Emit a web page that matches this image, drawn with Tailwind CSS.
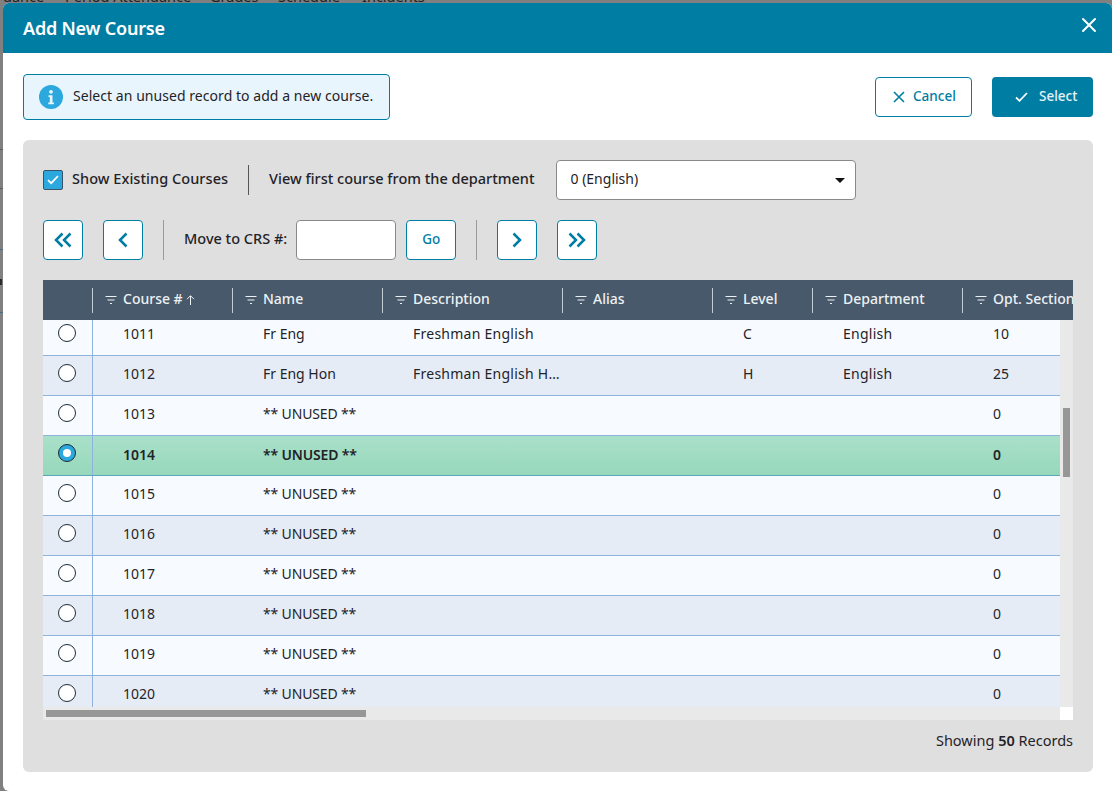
<!DOCTYPE html>
<html lang="en">
<head>
  <meta charset="UTF-8" />
  <title>Add New Course</title>
  <script src="https://cdn.jsdelivr.net/npm/@tailwindcss/browser@4"></script>
</head>
<body class="h-[791px] w-[1112px] overflow-hidden bg-[#808080] font-['Noto_Sans',sans-serif] text-[14px] text-[#1f2328]">

  <!-- Page behind the dialog -->
  <div class="absolute left-0 top-0 h-[3px] w-full overflow-hidden">
    <div class="-mt-[12px] flex h-4 items-center text-[14.5px] leading-4 text-[#222]">
      <span class="ml-[3px] w-[62px]">dance</span><span class="w-[145px]">Period Attendance</span><span class="w-[68px]">Grades</span><span class="w-[84px]">Schedule</span><span>Incidents</span>
    </div>
  </div>
  <div class="absolute left-0 top-[149px] h-px w-[3px] bg-[#5c5c5c]"></div>
  <div class="absolute left-0 top-[188px] h-px w-[3px] bg-[#5c5c5c]"></div>
  <div class="absolute left-0 top-[249px] h-px w-[3px] bg-[#3f6f80]"></div>
  <div class="absolute left-0 top-[279px] h-[6px] w-[2px] bg-[#2a2a2a]"></div>
  <div class="absolute left-0 top-[312px] h-px w-[3px] bg-[#3f6f80]"></div>

  <!-- Dialog -->
  <div class="ml-[3px] mt-[3px] flex h-[788px] w-[1109px] flex-col overflow-hidden rounded-l-[6px] rounded-tr-[6px] bg-white">
    <div class="flex h-[50px] shrink-0 items-center justify-between bg-[#007da3] pl-[20px] pr-[15px]">
      <h1 class="text-[18px] font-semibold tracking-[-0.2px] text-white">Add New Course</h1>
      <svg class="mb-[6px] h-[16px] w-[16px]" viewBox="0 0 16 16" fill="none" stroke="white" stroke-width="2" stroke-linecap="round"><path d="M2 2l12 12M14 2L2 14"/></svg>
    </div>

    <div class="flex h-[87px] shrink-0 items-center justify-between pl-[20px] pr-[19px]">
      <div class="flex h-[46px] w-[367px] items-center gap-[10px] rounded-[4px] border border-[#007da3] bg-[#e9f5fc] pl-[15px]">
        <svg class="h-[24px] w-[24px]" viewBox="0 0 24 24"><circle cx="12" cy="12" r="12" fill="#2ba8de"/><circle cx="12" cy="6.8" r="1.9" fill="#e9f5fc"/><path d="M9.5 10.2h4v7.2h1.4v1.8H9.3v-1.8h1.5v-5.4H9.5z" fill="#e9f5fc"/></svg>
        <span class="pb-[2px] text-[14px] tracking-[0.05px]">Select an unused record to add a new course.</span>
      </div>
      <div class="flex gap-[20px]">
        <button class="flex h-[40px] w-[97px] items-center gap-[8px] rounded-[4px] border border-[#007da3] bg-white pl-[17px] text-[13.5px] font-medium text-[#007da3]">
          <svg class="h-[12px] w-[12px]" viewBox="0 0 12 12" fill="none" stroke="#007da3" stroke-width="1.6"><path d="M1 1l10 10M11 1L1 11"/></svg>
          <span class="pb-[1px]">Cancel</span>
        </button>
        <button class="flex h-[40px] w-[101px] items-center gap-[11px] rounded-[4px] bg-[#007da3] pl-[23px] text-[13.5px] font-medium text-white/90">
          <svg class="h-[10px] w-[13px]" viewBox="0 0 13 10" fill="none" stroke="white" stroke-width="1.8"><path d="M1 5.5l3.5 3.3L12 1"/></svg>
          <span class="pb-[1px]">Select</span>
        </button>
      </div>
    </div>

    <div class="ml-[20px] flex h-[632px] w-[1070px] shrink-0 flex-col rounded-[6px] bg-[#dfdfdf] px-[20px] pt-[20px]">
      <div class="flex h-[40px] items-center">
        <span class="flex h-[20px] w-[20px] items-center justify-center rounded-[2px] border border-[#3b5368] bg-[#2ba8de]">
          <svg class="h-[10px] w-[12px]" viewBox="0 0 12 10" fill="none" stroke="white" stroke-width="1.8"><path d="M1 5.2l3.2 3L11 1"/></svg>
        </span>
        <span class="ml-[9px] pb-[3px] text-[14.5px] font-medium tracking-[0.05px]">Show Existing Courses</span>
        <span class="ml-[20px] h-[30px] w-px bg-[#555]"></span>
        <span class="ml-[20px] pb-[3px] text-[14.5px] font-medium">View first course from the department</span>
        <div class="ml-[22px] flex h-[40px] w-[300px] items-center justify-between rounded-[4px] border border-[#8a8a8a] bg-white pl-[13px] pr-[10px]">
          <span class="pb-[3px]">0 (English)</span>
          <span class="h-0 w-0 border-x-[5px] border-t-[5px] border-x-transparent border-t-[#111]"></span>
        </div>
      </div>

      <div class="mt-[20px] flex h-[40px] items-center">
        <button class="flex h-[40px] w-[40px] items-center justify-center rounded-[4px] border border-[#007da3] bg-white">
          <svg class="h-[16px] w-[18px]" viewBox="0 0 18 16" fill="none" stroke="#007da3" stroke-width="2.5"><path d="M8.5 1.5L2 8l6.5 6.5M16.5 1.5L10 8l6.5 6.5"/></svg>
        </button>
        <button class="ml-[20px] flex h-[40px] w-[40px] items-center justify-center rounded-[4px] border border-[#007da3] bg-white">
          <svg class="h-[16px] w-[10px]" viewBox="0 0 10 16" fill="none" stroke="#007da3" stroke-width="2.5"><path d="M8.5 1.5L2 8l6.5 6.5"/></svg>
        </button>
        <span class="ml-[20px] h-[40px] w-px bg-[#9a9a9a]"></span>
        <span class="ml-[20px] pb-[3px] text-[14.5px] font-medium">Move to CRS #:</span>
        <input class="ml-[9px] h-[40px] w-[100px] rounded-[4px] border border-[#8a8a8a] bg-white" />
        <button class="ml-[10px] flex h-[40px] w-[50px] items-center justify-center rounded-[4px] border border-[#007da3] bg-white pb-[1px] text-[13.5px] font-medium text-[#007da3]">Go</button>
        <span class="ml-[20px] h-[40px] w-px bg-[#9a9a9a]"></span>
        <button class="ml-[20px] flex h-[40px] w-[40px] items-center justify-center rounded-[4px] border border-[#007da3] bg-white">
          <svg class="h-[16px] w-[10px]" viewBox="0 0 10 16" fill="none" stroke="#007da3" stroke-width="2.5"><path d="M1.5 1.5L8 8l-6.5 6.5"/></svg>
        </button>
        <button class="ml-[20px] flex h-[40px] w-[40px] items-center justify-center rounded-[4px] border border-[#007da3] bg-white">
          <svg class="h-[16px] w-[18px]" viewBox="0 0 18 16" fill="none" stroke="#007da3" stroke-width="2.5"><path d="M1.5 1.5L8 8l-6.5 6.5M9.5 1.5L16 8l-6.5 6.5"/></svg>
        </button>
      </div>

      <!-- Grid -->
      <div class="relative mt-[20px] h-[440px] w-[1030px] shrink-0 overflow-hidden bg-[#e9e9e9]">
        <div id="head" class="grid h-[40px] w-[1030px] grid-cols-[50px_140px_150px_180px_150px_100px_150px_150px] overflow-hidden bg-[#47596b] text-[14px] font-medium text-[#eef1f4]"></div>
        <div class="h-[387px] w-[1017px] overflow-hidden">
          <div id="rows" class="-mt-[4px]"></div>
        </div>
        <!-- scrollbars -->
        <div class="absolute right-0 top-[40px] h-[387px] w-[13px] bg-[#e9e9e9]">
          <div class="ml-[3px] mt-[88px] h-[69px] w-[7px] bg-[#979797]"></div>
        </div>
        <div class="absolute bottom-0 left-0 h-[13px] w-[1017px] bg-[#e9e9e9]">
          <div class="ml-[3px] mt-[3px] h-[7px] w-[320px] bg-[#979797]"></div>
        </div>
        <div class="absolute bottom-0 right-0 h-[13px] w-[13px] bg-white"></div>
      </div>

      <div class="mt-[10px] text-right text-[14.5px]">Showing <b class="font-semibold">50</b> Records</div>
    </div>
  </div>

  <script>
    const filterIcon = `<svg class="mr-[6px] h-[12px] w-[12px] shrink-0" viewBox="0 0 12 12" fill="none" stroke="#eef1f4" stroke-width="1.1"><path d="M0.5 2.5h11M2.5 6h7M5 9.5h2"/></svg>`;
    const sortIcon = `<svg class="ml-[3px] h-[10px] w-[9px]" viewBox="0 0 9 10" fill="none" stroke="#eef1f4" stroke-width="1"><path d="M4.5 10V1M1 4.2l3.5-3.5L8 4.2"/></svg>`;
    const cols = ["Course #", "Name", "Description", "Alias", "Level", "Department", "Opt. Sections"];

    document.getElementById("head").innerHTML =
      `<div class="flex items-center"><span class="ml-auto h-[25px] w-px bg-[#c4ccd3]"></span></div>` +
      cols.map((c, i) => `
        <div class="flex items-center overflow-hidden whitespace-nowrap">
          <span class="ml-[12px] flex items-center">${filterIcon}<span class="pb-[3px]">${c}</span>${i === 0 ? sortIcon : ""}</span>
          <span class="ml-auto h-[25px] w-px shrink-0 ${i === 6 ? "hidden" : "bg-[#c4ccd3]"}"></span>
        </div>`).join("");

    const data = [
      ["1011", "Fr Eng", "Freshman English", "", "C", "English", "10"],
      ["1012", "Fr Eng Hon", "Freshman English H…", "", "H", "English", "25"],
    ];
    for (let n = 1013; n <= 1020; n++) data.push([String(n), "** UNUSED **", "", "", "", "", "0"]);

    document.getElementById("rows").innerHTML = data.map((row, i) => {
      const selected = row[0] === "1014";
      const rowBg = selected
        ? "bg-gradient-to-b from-[#a9e0c9] to-[#97d8bc] font-semibold border-[#5aa8b8]"
        : i % 2 ? "bg-[#e5ecf6] border-[#8fb3dc]" : "bg-[#f7fbff] border-[#8fb3dc]";
      const radio = selected
        ? '<span class="flex h-[18px] w-[18px] items-center justify-center rounded-full border border-[#1b2a36] bg-[#2ba8de]"><span class="h-[8px] w-[8px] rounded-full bg-white"></span></span>'
        : '<span class="block h-[18px] w-[18px] rounded-full border border-[#1b2a36] bg-white"></span>';
      const cellPad = selected ? "pb-[2px]" : "pb-[4px]";
      return `
        <div class="grid h-[40px] grid-cols-[50px_140px_150px_180px_150px_100px_150px_150px] items-center border-b ${rowBg}">
          <div class="flex h-full items-center justify-center border-r border-[#8fb3dc] pb-[6px] pr-[1px]">${radio}</div>
          ${row.map((v, c) => `<div class="overflow-hidden whitespace-nowrap ${cellPad} pl-[30px] leading-5 ${c === 2 || c === 5 ? "tracking-[0.25px]" : v.includes("UNUSED") ? "tracking-[-0.15px]" : ""}">${v}</div>`).join("")}
        </div>`;
    }).join("");
  </script>
</body>
</html>
